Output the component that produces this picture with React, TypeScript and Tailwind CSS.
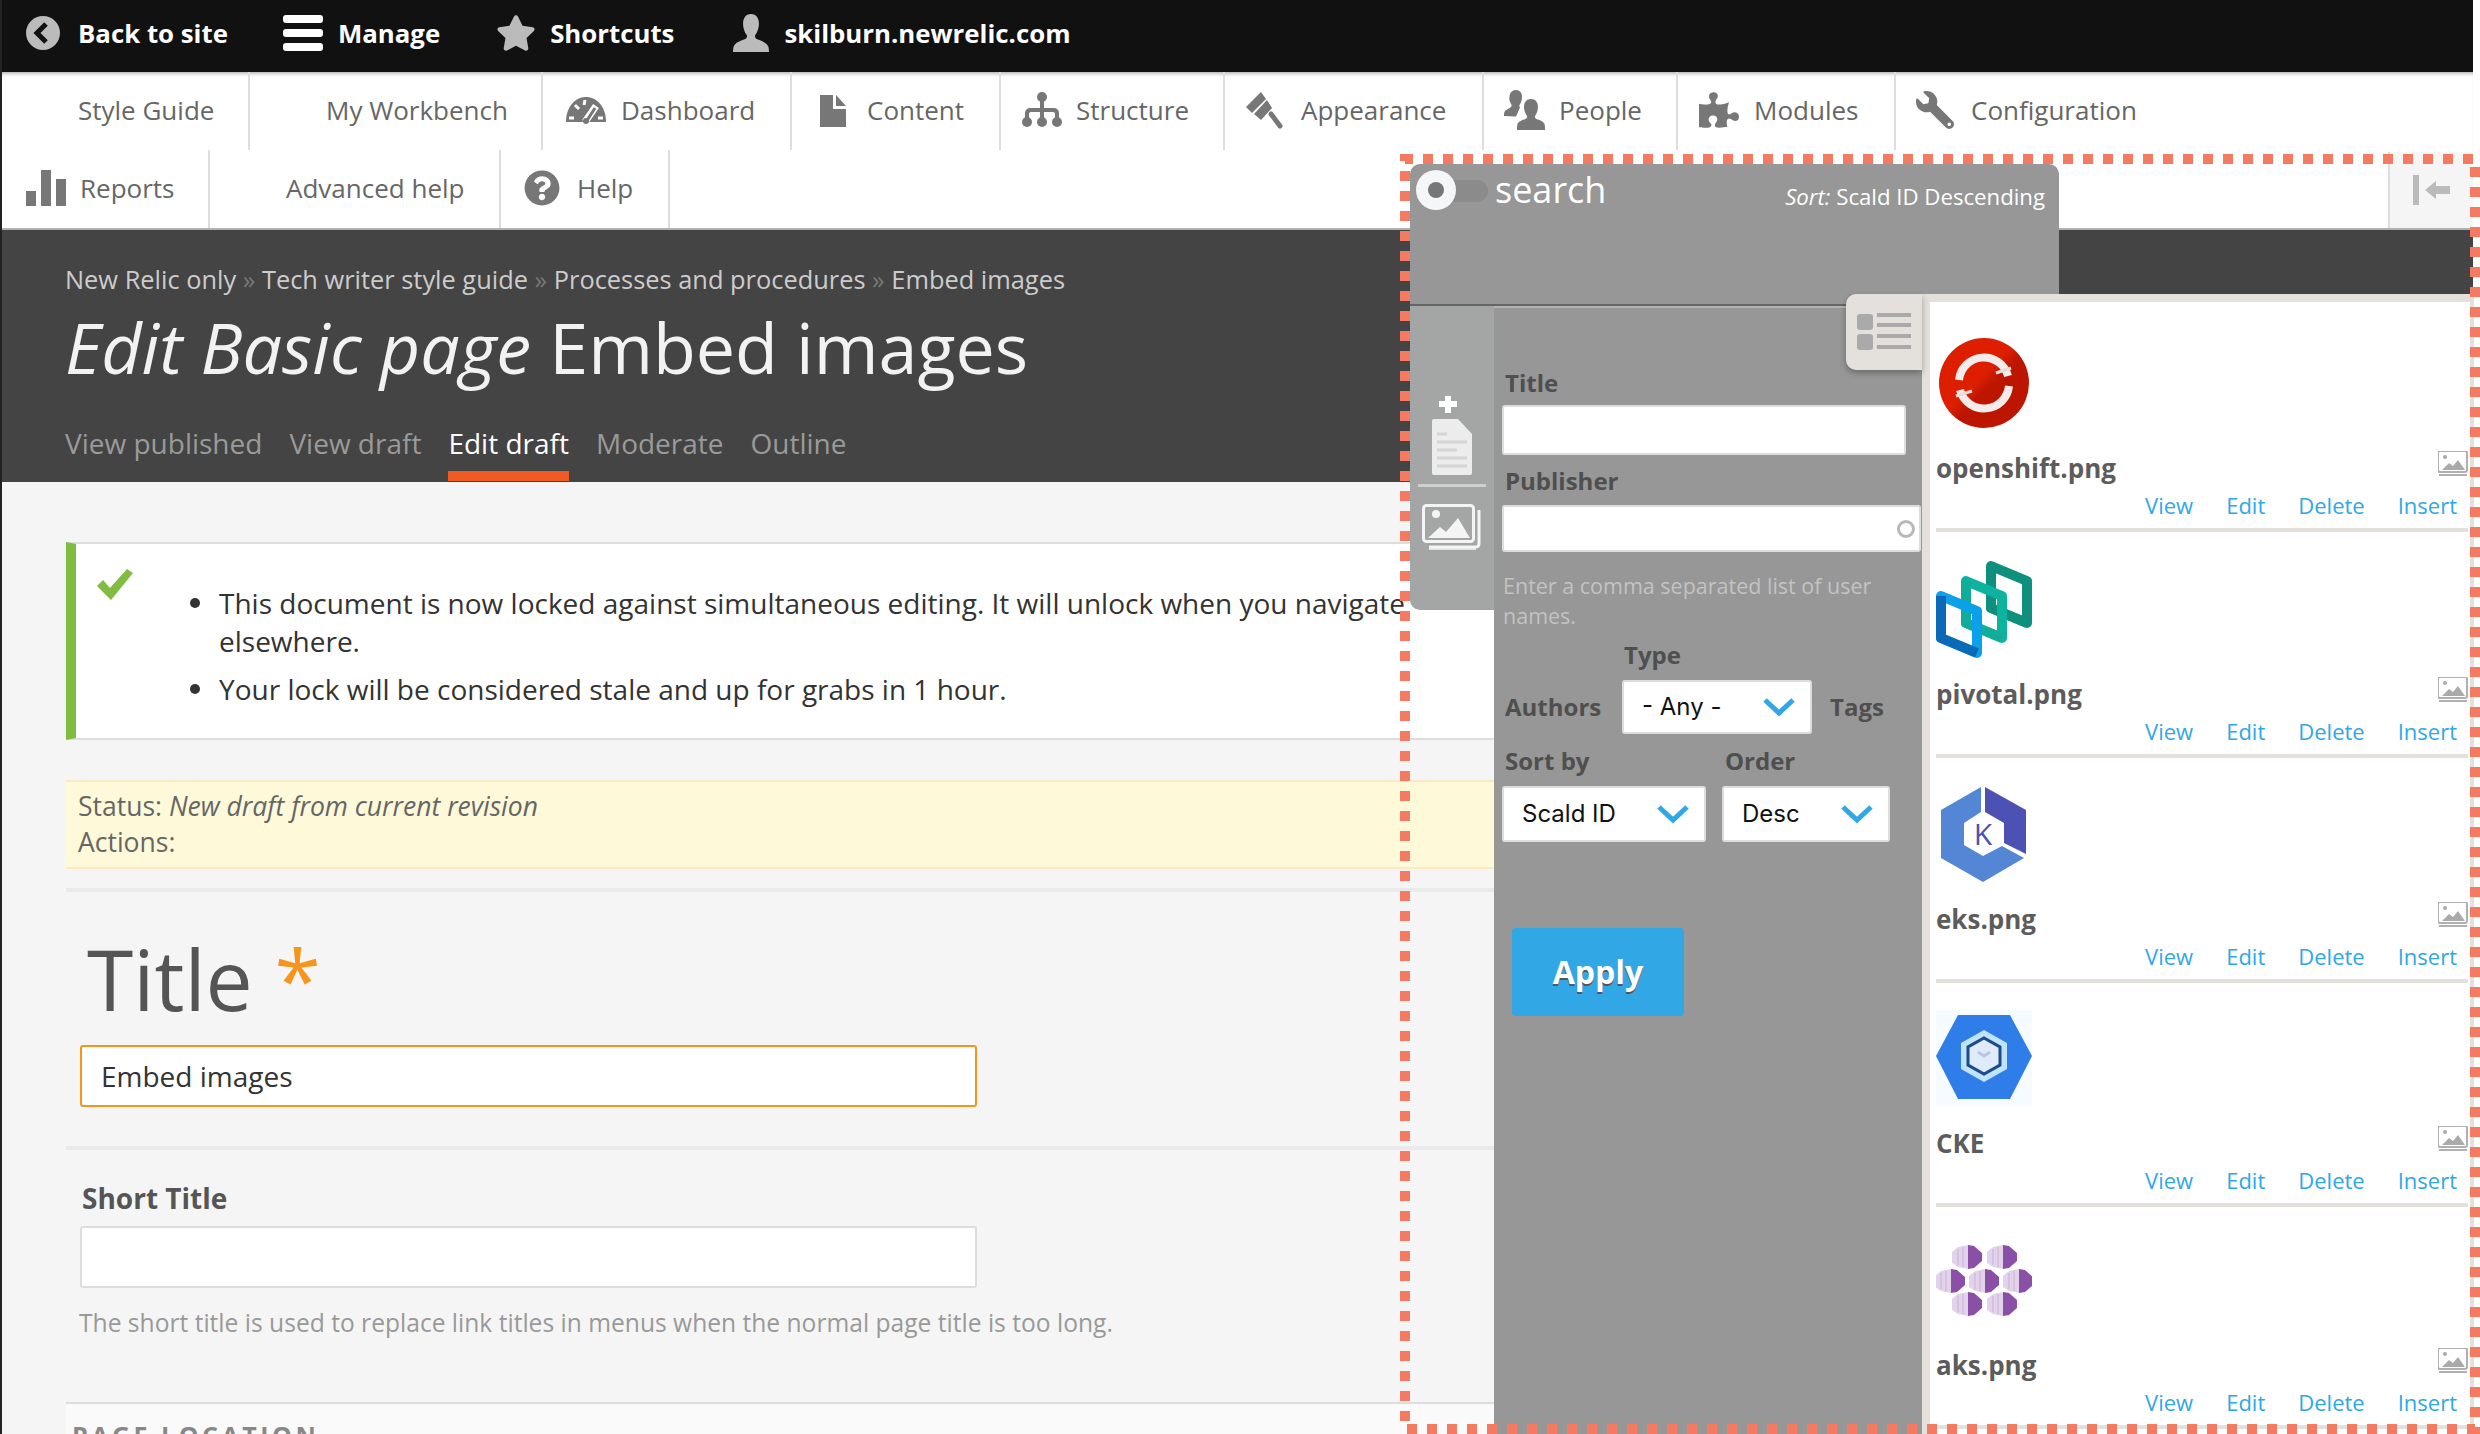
import React from "react";
import { FaPuzzlePiece, FaQuestionCircle, FaStar, FaWrench } from "react-icons/fa";

const Bust = ({ className }: { className?: string }) => (
  <svg viewBox="0 0 36 36" className={className} fill="currentColor">
    <path d="M18 0c5 0 7.500 4 7.500 9 0 5-2 9-3.500 11-.6 1.500 0 3 2 4 4 1.500 9 3 10.500 7 .4 1.500.5 3 .5 5H1c0-2 .1-3.500.5-5 1.500-4 6.500-5.500 10.500-7 2-1 2.600-2.500 2-4-1.500-2-3.500-6-3.500-11 0-5 2.500-9 7.500-9z" />
  </svg>
);

const GaugeIcon = () => (
  <svg viewBox="0 0 40 27" className="h-[27px] w-[40px]">
    <path d="M0 25C0 10 9 0 20 0s20 10 20 25z" fill="#777" />
    <path d="M9 8l4 4M19 3l-1 5M3 21h5M32 21h5" stroke="#fff" strokeWidth="3" />
    <path d="M19 25L30 9" stroke="#fff" strokeWidth="7" />
    <path d="M20 25L29 11" stroke="#777" strokeWidth="3" />
    <circle cx="20" cy="24" r="3" fill="#777" />
  </svg>
);

const DocIcon = () => (
  <svg viewBox="0 0 26 33" className="h-[33px] w-[26px]" fill="#777">
    <path d="M0 1h13v14h13v18H0z" />
    <path d="M16 1l10 11H16z" />
  </svg>
);

const TreeIcon = () => (
  <svg viewBox="0 0 40 36" className="h-[36px] w-[40px]" fill="#777">
    <circle cx="20" cy="5" r="5" />
    <rect x="18" y="6" width="4" height="12" />
    <path d="M3 26v-5a5 5 0 0 1 5-5h24a5 5 0 0 1 5 5v5h-4v-4a2 2 0 0 0-2-2H22v6h-4v-6H9a2 2 0 0 0-2 2v4z" />
    <circle cx="5" cy="30" r="5" />
    <circle cx="20" cy="30" r="5" />
    <circle cx="35" cy="30" r="5" />
  </svg>
);

const BrushIcon = () => (
  <svg viewBox="0 0 37 38" className="h-[38px] w-[37px]" fill="#777">
    <path d="M15 1L0 16l6 6L20 8z" />
    <path d="M8 23l7 6 11-12-5-8z" />
    <path d="M25 23l9 12" stroke="#777" strokeWidth="5" strokeLinecap="round" />
  </svg>
);

const PeopleIcon = () => (
  <svg viewBox="0 0 42 40" className="h-[40px] w-[42px]" fill="#777">
    <path d="M13 0c4 0 6 3 6 7 0 3-1 6-2.500 8-.5 1 0 2 .5 2.500l-4 9-12-.5c0-2 0-3.500 1-5 2-2 6-3 6.500-5 .2-1-.2-2-1-3C6.500 11 6 9 6.500 7 6.500 3 9 0 13 0z" />
    <path d="M28 9c4.500 0 7 3.500 7 8 0 3.500-1.500 7-3 9-.4 1 0 2.500 1.500 3 3 1 7 2.500 8 5 .5 1.500.5 3.500.5 6H14c0-2.500 0-4.500.5-6 1-2.500 5-4 8-5 1.500-.5 1.900-2 1.500-3-1.500-2-3-5.500-3-9 0-4.500 2.500-8 7-8z" />
  </svg>
);

const BarsIcon = () => (
  <svg viewBox="0 0 40 36" className="h-[36px] w-[40px]" fill="#777">
    <rect x="0" y="21" width="10" height="15" />
    <rect x="15" y="0" width="10" height="36" />
    <rect x="30" y="9" width="10" height="27" />
  </svg>
);

const row1 = [
  { label: "Style Guide", cell: "w-[248px] pl-[76px]", gap: "", icon: null },
  { label: "My Workbench", cell: "w-[293px] pl-[76px]", gap: "", icon: null },
  { label: "Dashboard", cell: "w-[249px] pl-[23px]", gap: "gap-[15px]", icon: <GaugeIcon /> },
  { label: "Content", cell: "w-[209px] pl-[28px]", gap: "gap-[21px]", icon: <DocIcon /> },
  { label: "Structure", cell: "w-[224px] pl-[21px]", gap: "gap-[14px]", icon: <TreeIcon /> },
  { label: "Appearance", cell: "w-[259px] pl-[21px]", gap: "gap-[18px]", icon: <BrushIcon /> },
  { label: "People", cell: "w-[194px] pl-[19px]", gap: "gap-[14px]", icon: <PeopleIcon /> },
  { label: "Modules", cell: "w-[218px] pl-[21px]", gap: "gap-[15px]", icon: <FaPuzzlePiece className="h-[36px] w-[40px] text-[#777]" /> },
];

const row2 = [
  { label: "Reports", cell: "w-[208px] pl-[24px]", gap: "gap-[14px]", icon: <BarsIcon /> },
  { label: "Advanced help", cell: "w-[291px] pl-[76px]", gap: "", icon: null },
  { label: "Help", cell: "w-[169px] pl-[23px]", gap: "gap-[17px]", icon: <FaQuestionCircle className="h-[36px] w-[36px] text-[#777]" /> },
];

const NavCell = ({ item }: { item: (typeof row1)[number] }) => (
  <div className={`flex h-full shrink-0 items-center border-r-2 border-[#dddddd] pb-[2px] ${item.cell} ${item.gap}`}>
    {item.icon}
    <span className="text-[26px] text-[#666666]">{item.label}</span>
  </div>
);

const TopBar = () => (
  <div className="flex h-[72px] items-center bg-[#111111] pb-[6px] text-[25.800px] font-bold text-white">
    <svg viewBox="0 0 34 34" className="ml-[24px] h-[34px] w-[34px]">
      <circle cx="17" cy="17" r="17" fill="#bbbbbb" />
      <path d="M20 8l-9 9 9 9" fill="none" stroke="#111111" strokeWidth="5" />
    </svg>
    <span className="ml-[18px]">Back to site</span>
    <div className="ml-[55px] flex h-[36px] w-[40px] flex-col justify-between">
      <div className="h-[8px] rounded-[3px] bg-white" />
      <div className="h-[8px] rounded-[3px] bg-white" />
      <div className="h-[8px] rounded-[3px] bg-white" />
    </div>
    <span className="ml-[15px]">Manage</span>
    <FaStar className="ml-[56px] h-[38px] w-[40px] text-[#bbbbbb]" />
    <span className="ml-[14px]">Shortcuts</span>
    <Bust className="ml-[58px] h-[38px] w-[38px] text-[#bbbbbb]" />
    <span className="ml-[14px]">skilburn.newrelic.com</span>
  </div>
);

const Nav = () => (
  <div className="border-b-2 border-[#b0b0b0] bg-white shadow-[inset_0_4px_4px_-3px_#999999]">
    <div className="flex h-[78px]">
      {row1.map((item) => (
        <NavCell key={item.label} item={item} />
      ))}
      <div className="flex h-full items-center gap-[16px] pb-[2px] pl-[19px]">
        <FaWrench className="h-[38px] w-[40px] -scale-x-100 text-[#777]" />
        <span className="text-[26px] text-[#666666]">Configuration</span>
      </div>
    </div>
    <div className="flex h-[78px]">
      {row2.map((item) => (
        <NavCell key={item.label} item={item} />
      ))}
      <div className="ml-auto mt-[2px] flex w-[85px] items-center justify-center border-l-2 border-[#dddddd] bg-[#f5f5f5]">
        <svg viewBox="0 0 38 30" className="h-[30px] w-[38px]" fill="#bbbbbb">
          <rect x="0" y="0" width="6" height="30" />
          <path d="M12 15l11-9v5h14v8H23v5z" />
        </svg>
      </div>
    </div>
  </div>
);

const PageHeader = () => (
  <div className="flex h-[252px] flex-col bg-[#444444] pl-[63px]">
    <div className="mt-[31px] text-[25.400px] leading-[36px] text-[#cccccc]">
      New Relic only <span className="text-[#777777]">»</span> Tech writer style guide{" "}
      <span className="text-[#777777]">»</span> Processes and procedures <span className="text-[#777777]">»</span> Embed images
    </div>
    <div className="mt-[6px] text-[70px] leading-[88px] text-[#f2f2f2]">
      <em>Edit Basic page</em> Embed images
    </div>
    <div className="mt-[32px] flex gap-[27px] text-[28px] leading-[40px] text-[#9a9a9a]">
      <span>View published</span>
      <span>View draft</span>
      <span className="relative text-white">
        Edit draft
        <span className="absolute bottom-[-18px] left-0 right-0 h-[10px] bg-[#f15a24]" />
      </span>
      <span>Moderate</span>
      <span>Outline</span>
    </div>
  </div>
);

const Body = () => (
  <div className="flex h-[952px] flex-col bg-[#f5f5f5] pl-[64px]">
    <div className="mt-[60px] h-[198px] shrink-0 border-y-2 border-l-[10px] border-y-[#dddddd] border-l-[#80bc40] bg-white">
      <div className="relative">
        <svg viewBox="0 0 36 31" className="absolute left-[21px] top-[25px] h-[31px] w-[36px]" fill="#80bc40">
          <path d="M0 17l6-6 7 8L30 0l6 4-22 27z" />
        </svg>
        <div className="ml-[143px] w-[1220px] pt-[40px] text-[28px] leading-[38px] text-[#333333]">
          <div className="relative mb-[10px] w-[1200px]">
            <span className="absolute left-[-29px] top-[14px] h-[10px] w-[10px] rounded-full bg-[#333333]" />
            This document is now locked against simultaneous editing. It will unlock when you navigate elsewhere.
          </div>
          <div className="relative">
            <span className="absolute left-[-29px] top-[14px] h-[10px] w-[10px] rounded-full bg-[#333333]" />
            Your lock will be considered stale and up for grabs in 1 hour.
          </div>
        </div>
      </div>
    </div>
    <div className="mt-[40px] h-[89px] shrink-0 border-y-2 border-[#fde8c4] bg-[#fef9d9] pl-[12px] pt-[6px] text-[26.500px] leading-[36px] text-[#666666]">
      <div>
        Status: <em>New draft from current revision</em>
      </div>
      <div>Actions:</div>
    </div>
    <div className="mt-[19px] h-[4px] shrink-0 bg-[#eaeaea]" />
    <div className="ml-[21px] mt-[37px] h-[100px] shrink-0 text-[84px] leading-[100px] text-[#555555]">
      Title <span className="text-[#f7941d]">*</span>
    </div>
    <div className="ml-[14px] mt-[16px] flex h-[62px] w-[897px] shrink-0 items-center rounded-[3px] border-2 border-[#f7941d] bg-white pl-[19px] text-[28px] text-[#333333]">
      Embed images
    </div>
    <div className="mt-[39px] h-[4px] shrink-0 bg-[#eaeaea]" />
    <div className="ml-[16px] mt-[30px] shrink-0 text-[28px] font-bold leading-[36px] text-[#555555]">Short Title</div>
    <div className="ml-[14px] mt-[10px] h-[62px] w-[897px] shrink-0 rounded-[3px] border-2 border-[#dddddd] bg-white" />
    <div className="ml-[13px] mt-[17px] shrink-0 text-[24.600px] leading-[36px] text-[#999999]">
      The short title is used to replace link titles in menus when the normal page title is too long.
    </div>
    <div className="mt-[61px] h-[2px] shrink-0 bg-[#dddddd]" />
    <div className="min-h-0 flex-1 overflow-hidden bg-[#fafafa] pl-[6px] pt-[17px] text-[25px] font-bold leading-[28px] tracking-[3.500px] text-[#888888]">
      PAGE LOCATION
    </div>
  </div>
);

const Chevron = () => (
  <svg viewBox="0 0 32 20" className="h-[20px] w-[32px]" fill="none" stroke="#31a7e6" strokeWidth="5">
    <path d="M2 3l14 13L30 3" />
  </svg>
);

const Select = ({ label, cls }: { label: string; cls: string }) => (
  <div className={`flex items-center justify-between rounded-[3px] border-2 border-[#dddddd] bg-white font-[Inter,sans-serif] text-[24px] font-normal text-[#111111] ${cls}`}>
    <span>{label}</span>
    <Chevron />
  </div>
);

const SmallImage = () => (
  <svg viewBox="0 0 30 25" className="mt-[1px] h-[25px] w-[30px]">
    <rect x="0" y="0" width="29" height="21" rx="2" fill="#ffffff" stroke="#b0b0b0" strokeWidth="2" />
    <path d="M1 24h28" stroke="#b0b0b0" strokeWidth="2" />
    <circle cx="7" cy="6" r="2" fill="#aaaaaa" />
    <path d="M4 19l7-7 4 3 5-6 7 10z" fill="#aaaaaa" />
  </svg>
);

const OpenShift = () => (
  <svg viewBox="0 0 96 96" className="h-[96px] w-[96px]">
    <defs>
      <linearGradient id="osg" x1="0" y1="0" x2="1" y2="1">
        <stop offset="0.45" stopColor="#dd1f00" />
        <stop offset="0.55" stopColor="#bd1600" />
      </linearGradient>
    </defs>
    <circle cx="48" cy="48" r="45" fill="url(#osg)" />
    <path d="M23 45a25 25 0 0 1 49-4M73 51a25 25 0 0 1-49 4" fill="none" stroke="#f3ecea" strokeWidth="8" />
    <path d="M60 38l15-5M20 61l16-5" fill="none" stroke="#e8dcd8" strokeWidth="3" />
  </svg>
);

const Para = ({ x, y, c1, c2 }: { x: number; y: number; c1: string; c2: string }) => (
  <g transform={`translate(${x} ${y})`} fill="none" strokeWidth="10" strokeLinejoin="round">
    <path d="M5 5L41 20V62L5 47Z" stroke={c1} />
    <path d="M5 5V47L41 62" stroke={c2} />
  </g>
);

const Pivotal = () => (
  <svg viewBox="0 0 96 98" className="h-[98px] w-[96px]">
    <Para x={50} y={0} c1="#0f8f7e" c2="#0f8f7e" />
    <Para x={25} y={15} c1="#0db39e" c2="#12ad9a" />
    <Para x={0} y={30} c1="#0aa0ea" c2="#0a6ab8" />
  </svg>
);

const Eks = () => (
  <svg viewBox="0 0 96 96" className="h-[96px] w-[96px]">
    <path d="M45 1L5 24V72L47 96L88 72L66 60L47 70L28 59V37L45 26Z" fill="#5486d6" />
    <path d="M49 1L90 24V68L68 57V37L49 26Z" fill="#4b52b3" />
    <text x="47" y="59" textAnchor="middle" fontSize="30" fill="#4b52b3" fontFamily="Open Sans, sans-serif">K</text>
  </svg>
);

const Cke = () => (
  <svg viewBox="0 0 96 96" className="h-[96px] w-[96px]">
    <rect width="96" height="96" fill="#f6fbff" />
    <path d="M22 5h52l22 41-22 43H22L0 46z" fill="#2f7de8" />
    <path d="M48 20l23 13v26L48 72 25 59V33z" fill="#bfe3fb" />
    <path d="M48 28l16 9v18l-16 9-16-9V37z" fill="#dfeafa" stroke="#1a4a8a" strokeWidth="3" />
    <path d="M42 42l6 4 6-4" fill="none" stroke="#b8c6e6" strokeWidth="3" />
  </svg>
);

const Cube = ({ x, y }: { x: number; y: number }) => (
  <g transform={`translate(${x - 15} ${y - 12})`}>
    <path d="M6 2l10-2v24l-10-2-6-4V7z" fill="#e2d3ea" />
    <path d="M16 0l6 1 8 7v8l-8 7-6 1z" fill="#8a4fa6" />
    <path d="M6 4v16M11 2v20" stroke="#c9afd8" strokeWidth="1" />
  </g>
);

const Aks = () => (
  <svg viewBox="0 0 96 96" className="h-[96px] w-[96px]">
    <Cube x={31} y={25} />
    <Cube x={66} y={25} />
    <Cube x={14} y={49} />
    <Cube x={48} y={49} />
    <Cube x={82} y={49} />
    <Cube x={31} y={72} />
    <Cube x={66} y={72} />
  </svg>
);

const items = [
  { name: "openshift.png", h: "h-[230px]", logo: <OpenShift /> },
  { name: "pivotal.png", h: "h-[226px]", logo: <Pivotal /> },
  { name: "eks.png", h: "h-[225px]", logo: <Eks /> },
  { name: "CKE", h: "h-[224px]", logo: <Cke /> },
  { name: "aks.png", h: "h-[222px]", logo: <Aks /> },
];

const Overlay = () => (
  <div className="absolute left-[1408px] top-[164px] flex h-[1270px] w-[1064px] flex-col font-['Open_Sans',sans-serif]">
    <div className="flex h-[130px] w-[649px] shrink-0 items-start rounded-t-[10px] bg-[#969796] pl-[6px] pt-[6px]">
      <div className="relative h-[40px] w-[72px]">
        <div className="absolute left-[30px] right-0 top-[10px] h-[22px] rounded-r-[11px] bg-[#8b8b8b]" />
        <div className="absolute left-0 top-0 flex h-[40px] w-[40px] items-center justify-center rounded-full bg-[#f5f6f7]">
          <div className="h-[16px] w-[16px] rounded-full bg-[#777777]" />
        </div>
      </div>
      <span className="ml-[7px] text-[36px] leading-[40px] text-white">search</span>
      <span className="ml-auto mr-[14px] mt-[11px] text-[22.200px] leading-[32px] text-white">
        <em>Sort:</em> Scald ID Descending
      </span>
    </div>
    <div className="flex min-h-0 flex-1">
      <div className="relative flex w-[512px] shrink-0 flex-col">
        <div className="h-[10px] shrink-0 bg-[#969796]" />
        <div className="h-[2px] shrink-0 bg-[#666666]" />
        <div className="flex min-h-0 flex-1">
          <div className="flex h-[304px] w-[84px] shrink-0 flex-col items-center rounded-bl-[10px] bg-[#a3a6a5]">
            <svg viewBox="0 0 60 84" className="mt-[86px] h-[84px] w-[60px]">
              <path d="M23 4h6v5h6v6h-6v6h-6v-6h-6V9h6z" fill="#ffffff" />
              <path d="M12 27h24l14 15v39a2 2 0 0 1-2 2H12a2 2 0 0 1-2-2V29a2 2 0 0 1 2-2z" fill="#ececec" />
              <path d="M15 42h10M15 50h30M15 58h20M15 66h30M15 74h30" stroke="#d4d4d4" strokeWidth="3" />
            </svg>
            <div className="mt-[8px] h-[3px] w-[68px] bg-[#cfd0cf]" />
            <svg viewBox="0 0 60 46" className="mt-[17px] h-[46px] w-[60px]" fill="none">
              <rect x="1.500" y="1.500" width="50" height="36" rx="3" stroke="#f4f4f4" strokeWidth="3" />
              <path d="M57 6v34a3 3 0 0 1-3 3H7" stroke="#f4f4f4" strokeWidth="3" />
              <path d="M7 45h47" stroke="#f4f4f4" strokeWidth="1.500" />
              <circle cx="14" cy="10" r="4" fill="#f4f4f4" />
              <path d="M6 34l12-11 6 5 12-14 12 20z" fill="#f4f4f4" />
            </svg>
          </div>
          <div className="flex-1 border-t-2 border-[#b4b5b4] bg-[#969796]">
            <div className="ml-[11px] mt-[60px] text-[24px] font-bold leading-[30px] text-[#4f4f4f]">Title</div>
            <div className="ml-[8px] mt-[7px] h-[50px] w-[404px] rounded-[3px] border-2 border-[#dddddd] bg-white" />
            <div className="ml-[11px] mt-[11px] text-[24px] font-bold leading-[30px] text-[#4f4f4f]">Publisher</div>
            <div className="ml-[8px] mt-[9px] flex h-[47px] w-[419px] items-center justify-end rounded-[3px] border-2 border-[#dddddd] bg-white pr-[4px]">
              <div className="h-[18px] w-[18px] rounded-full border-[3px] border-[#b8b8b8]" />
            </div>
            <div className="ml-[9px] mt-[19px] w-[410px] text-[21.500px] leading-[30px] text-[#c2c3c2]">
              Enter a comma separated list of user names.
            </div>
            <div className="ml-[130px] mt-[9px] text-[24px] font-bold leading-[30px] text-[#4f4f4f]">Type</div>
            <div className="ml-[11px] mt-[10px] flex h-[54px] items-center text-[24px] font-bold text-[#4f4f4f]">
              <span className="w-[117px]">Authors</span>
              <Select label="- Any -" cls="h-[54px] w-[190px] pl-[18px] pr-[15px]" />
              <span className="ml-[18px]">Tags</span>
            </div>
            <div className="ml-[11px] mt-[12px] flex text-[24px] font-bold leading-[30px] text-[#4f4f4f]">
              <span className="w-[220px]">Sort by</span>
              <span>Order</span>
            </div>
            <div className="ml-[8px] mt-[10px] flex gap-[16px]">
              <Select label="Scald ID" cls="h-[56px] w-[204px] pl-[18px] pr-[15px]" />
              <Select label="Desc" cls="h-[56px] w-[168px] pl-[18px] pr-[15px]" />
            </div>
            <div className="ml-[18px] mt-[86px] flex h-[88px] w-[172px] items-center justify-center rounded-[4px] bg-[#31a7e6] text-[32px] font-bold text-white [text-shadow:0_2px_0_#555555]">
              Apply
            </div>
          </div>
        </div>
        <div className="absolute right-0 top-0 flex h-[76px] w-[76px] flex-col justify-center gap-[3px] rounded-l-[10px] bg-[#e4e0dc] pl-[11px] shadow-[0_3px_6px_rgba(0,0,0,0.3)]">
          <svg viewBox="0 0 54 38" className="h-[38px] w-[54px]">
            <rect x="0" y="1" width="16" height="16" rx="3" fill="#aaaaaa" />
            <rect x="0" y="21" width="16" height="16" rx="3" fill="#aaaaaa" />
            <path d="M20 2h34M20 12h34M20 23h34M20 34h34" stroke="#aaaaaa" strokeWidth="4" />
          </svg>
        </div>
      </div>
      <div className="min-w-0 flex-1 border-b-0 border-l-[8px] border-r-[4px] border-t-[8px] border-[#e4e0dc] bg-white pl-[6px] pr-[2px]">
        {items.map((item) => (
          <div key={item.name} className={`flex flex-col justify-end ${item.h}`}>
            <div className="h-[96px]">{item.logo}</div>
            <div className="mt-[19px] flex h-[36px] items-start justify-between">
              <span className="text-[26px] font-bold leading-[36px] text-[#5c5c5c]">{item.name}</span>
              <SmallImage />
            </div>
            <div className="mt-[5px] flex h-[28px] justify-end gap-[33px] pr-[11px] text-[22px] leading-[28px] text-[#31a7e6]">
              <span>View</span>
              <span>Edit</span>
              <span>Delete</span>
              <span>Insert</span>
            </div>
            <div className="mt-[9px] h-[4px] shrink-0 bg-[#e4e0dc]" />
          </div>
        ))}
      </div>
    </div>
  </div>
);

const DashedFrame = () => (
  <svg viewBox="0 0 1080 1280" className="pointer-events-none absolute left-[1398px] top-[154px] h-[1280px] w-[1080px]" fill="none">
    <rect x="5" y="5" width="1070" height="1270" stroke="#f57a62" strokeWidth="10" strokeDasharray="10 10" strokeDashoffset="2" />
  </svg>
);

export default function App() {
  return (
    <div className="relative h-[1434px] w-[2480px] overflow-hidden border-l-2 border-[#222222] bg-white font-['Open_Sans',sans-serif]">
      <div className="pr-[7px]">
        <TopBar />
        <Nav />
        <PageHeader />
        <Body />
      </div>
      <Overlay />
      <DashedFrame />
    </div>
  );
}
